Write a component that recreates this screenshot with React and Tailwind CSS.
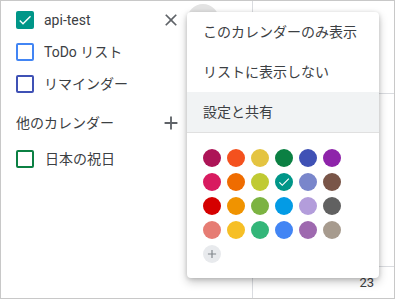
import React from "react";

const font = { fontFamily: 'Roboto, "Noto Sans CJK JP", sans-serif' };

const colors = [
  ["#ad1457", "#f4511e", "#e4c441", "#0b8043", "#3f51b5", "#8e24aa"],
  ["#d81b60", "#ef6c00", "#c0ca33", "#009688", "#7986cb", "#795548"],
  ["#d50000", "#f09300", "#7cb342", "#039be5", "#b39ddb", "#616161"],
  ["#e67c73", "#f6bf26", "#33b679", "#4285f4", "#9e69af", "#a79b8e"],
];

function Check({ size = 14 }) {
  return (
    <svg width={size} height={size} viewBox="0 0 24 24" fill="#fff">
      <path d="M9 16.17L4.83 12l-1.42 1.41L9 19 21 7l-1.41-1.41z" />
    </svg>
  );
}

function Box({ color, checked }) {
  if (checked) {
    return (
      <div className="w-[18px] h-[18px] rounded-[2px] flex items-center justify-center shrink-0" style={{ backgroundColor: color }}>
        <Check size={16} />
      </div>
    );
  }
  return <div className="w-[18px] h-[18px] rounded-[2px] border-2 shrink-0" style={{ borderColor: color }} />;
}

export default function App() {
  return (
    <div className="relative w-[395px] h-[299px] border border-[#c8c8c8] bg-white flex overflow-hidden text-[#3c4043]" style={font}>
      {/* sidebar */}
      <div className="w-[252px] h-full border-r border-[#dadce0] pt-[3px] shrink-0">
        <div className="h-8 flex items-center pl-[15px] pr-[33px]">
          <Box color="#009688" checked />
          <span className="ml-[10px] text-[14px] flex-1">api-test</span>
          <div className="w-6 h-6 flex items-center justify-center">
            <svg width="20" height="20" viewBox="0 0 24 24" fill="#5f6368">
              <path d="M19 6.41L17.59 5 12 10.59 6.41 5 5 6.41 10.59 12 5 17.59 6.41 19 12 13.41 17.59 19 19 17.59 13.41 12z" />
            </svg>
          </div>
          <div className="w-8 h-8 ml-1 rounded-full bg-[#e3e3e3]" />
        </div>
        <div className="h-8 flex items-center pl-[15px]">
          <Box color="#4285f4" />
          <span className="ml-[10px] text-[14px]">ToDo リスト</span>
        </div>
        <div className="h-8 flex items-center pl-[15px]">
          <Box color="#3f51b5" />
          <span className="ml-[10px] text-[14px]">リマインダー</span>
        </div>
        <div className="mt-[3px] h-10 flex items-center justify-between pl-[15px] pr-[69px]">
          <span className="text-[14px]">他のカレンダー</span>
          <div className="w-6 h-6 flex items-center justify-center">
            <svg width="22" height="22" viewBox="0 0 24 24" fill="#5f6368">
              <path d="M19 13h-6v6h-2v-6H5v-2h6V5h2v6h6v2z" />
            </svg>
          </div>
        </div>
        <div className="h-8 flex items-center pl-[15px]">
          <Box color="#0b8043" />
          <span className="ml-[11px] text-[14px]">日本の祝日</span>
        </div>
      </div>

      {/* calendar area */}
      <div className="flex-1 flex flex-col">
        <div className="h-[93px] border-b border-[#dadce0]" />
        <div className="h-[173px] border-b border-[#dadce0]" />
        <div className="flex-1 flex justify-end pr-[20px] pt-[8px]">
          <span className="text-[13px] leading-4 text-[#3c4043]">23</span>
        </div>
      </div>

      {/* popup menu */}
      <div className="absolute left-[186px] top-[11px] w-[192px] h-[266px] bg-white rounded-[4px] shadow-[0_4px_10px_rgba(0,0,0,0.22),0_1px_4px_rgba(0,0,0,0.16)] flex flex-col">
        <div className="h-10 flex items-center px-4 text-[14px]">このカレンダーのみ表示</div>
        <div className="h-10 flex items-center px-4 text-[14px]">リストに表示しない</div>
        <div className="h-10 flex items-center px-4 text-[14px] bg-[#f1f3f4]">設定と共有</div>
        <div className="border-t border-[#e0e0e0] pt-4 pl-4 pb-[15px]">
          <div className="grid grid-cols-[repeat(6,18px)] gap-[6px]">
            {colors.flat().map((c, i) => (
              <div key={i} className="w-[18px] h-[18px] rounded-full flex items-center justify-center" style={{ backgroundColor: c }}>
                {c === "#009688" && <Check size={14} />}
              </div>
            ))}
            <div className="w-[18px] h-[18px] rounded-full bg-[#e8eaed] flex items-center justify-center">
              <svg width="14" height="14" viewBox="0 0 24 24" fill="#80868b">
                <path d="M19 13h-6v6h-2v-6H5v-2h6V5h2v6h6v2z" />
              </svg>
            </div>
          </div>
        </div>
      </div>
    </div>
  );
}
